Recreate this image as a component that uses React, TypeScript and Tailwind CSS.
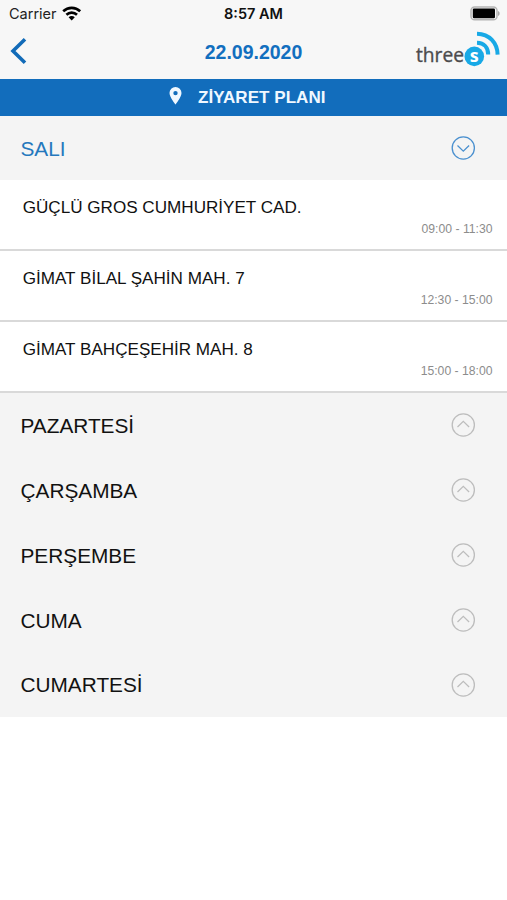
import React from 'react';

const visits = [
  { name: 'GÜÇLÜ GROS CUMHURİYET CAD.', time: '09:00 - 11:30' },
  { name: 'GİMAT BİLAL ŞAHİN MAH. 7', time: '12:30 - 15:00' },
  { name: 'GİMAT BAHÇEŞEHİR MAH. 8', time: '15:00 - 18:00' },
];

const days = ['PAZARTESİ', 'ÇARŞAMBA', 'PERŞEMBE', 'CUMA', 'CUMARTESİ'];

function CircleChevron({ open = false }: { open?: boolean }) {
  return (
    <svg
      width="26"
      height="26"
      viewBox="0 0 26 26"
      fill="none"
      className={open ? 'stroke-[#4a90cf]' : 'stroke-[#bdbdbd]'}
      strokeWidth="1.3"
    >
      <circle cx="13.3" cy="13" r="11.1" />
      <path d={open ? 'M7.5 10.5 13.3 16.2 19.1 10.5' : 'M7.5 15 13.3 9.4 19.1 15'} />
    </svg>
  );
}

function Wifi() {
  return (
    <svg width="20" height="16" viewBox="0 0 20 16" fill="none" stroke="#000" strokeWidth="2.6">
      <path d="M1.2 5.3C6 .7 13.4 .7 18.2 5.3" />
      <path d="M4.4 8.8C7.4 5.9 12 5.9 15 8.8" />
      <path d="M6.6 11.2C8.3 9.5 11.1 9.5 12.8 11.2L9.7 14.5Z" fill="#000" stroke="none" />
    </svg>
  );
}

function Battery() {
  return (
    <svg width="30" height="16" viewBox="0 0 30 16">
      <rect x="1" y="1" width="26" height="12.8" rx="3.6" fill="none" stroke="#b4b4b4" strokeWidth="1.5" />
      <rect x="2.8" y="2.5" width="22.2" height="9.8" rx="1.2" fill="#000" />
      <path d="M28 5C30.2 6.2 30.2 8.8 28 10Z" fill="#a8a8a8" />
    </svg>
  );
}

function Logo() {
  return (
    <svg width="91" height="42" viewBox="0 0 91 42">
      <text x="6" y="35.4" fontSize="19.5" textLength="48" lengthAdjust="spacingAndGlyphs" fill="#4b4b4d" stroke="#4b4b4d" strokeWidth="0.35" className="font-['Open_Sans',sans-serif]">
        three
      </text>
      <circle cx="64.3" cy="29.4" r="9.8" fill="#18a9e6" />
      <text x="64.3" y="34.8" fontSize="18" fontWeight="700" textAnchor="middle" fill="#fff" className="font-['Open_Sans',sans-serif]">
        s
      </text>
      <g fill="none" stroke="#18a9e6" strokeWidth="4">
        <path d="M67 15.8C74 16 78.2 20.6 78.2 27.6" />
        <path d="M67 6.8C79.5 7 87.4 16 87.6 27.6" />
      </g>
    </svg>
  );
}

export default function App() {
  return (
    <div className="h-[900px] w-[507px] overflow-hidden bg-white font-['Liberation_Sans',Arial,sans-serif] text-[#111]">
      <header className="h-[79px] bg-[#f7f7f7]">
        <div className="grid h-[27px] grid-cols-3 pt-1 pr-[7px] pl-[9px] font-['Inter',sans-serif] text-[14.5px]">
          <div className="flex h-[19px] items-center gap-[5px]">
            <span className="text-[#222]">Carrier</span>
            <Wifi />
          </div>
          <div className="flex h-[19px] items-center justify-center pr-[2px] font-semibold">8:57 AM</div>
          <div className="flex h-[19px] items-center justify-end">
            <Battery />
          </div>
        </div>
        <div className="grid h-[52px] grid-cols-[1fr_auto_1fr] items-start">
          <svg width="30" height="48" viewBox="0 0 30 48" fill="none" stroke="#126bb8" strokeWidth="3.6">
            <path d="M25 12.3 13 24 25 35.7" />
          </svg>
          <h1 className="pt-[11px] text-[19.5px] leading-[28px] font-bold text-[#126fbf]">22.09.2020</h1>
          <div className="flex justify-end pr-[6px]">
            <Logo />
          </div>
        </div>
      </header>

      <div className="flex h-[37px] items-center bg-[#126dbc] pl-[169px] text-[17px] font-bold text-[#f0f8ff]">
        <svg width="13" height="18" viewBox="0 0 13 18" fill="currentColor" className="mb-[3px]">
          <path fillRule="evenodd" d="M6.5 0A6 6 0 0 0 .5 6.1C.5 10.3 6.5 17.6 6.5 17.6S12.5 10.3 12.5 6.1A6 6 0 0 0 6.5 0ZM6.5 3.9A2.2 2.2 0 1 1 6.5 8.3 2.2 2.2 0 0 1 6.5 3.9Z" />
        </svg>
        <span className="ml-4 tracking-[0.05px]">ZİYARET PLANI</span>
      </div>

      <section>
        <div className="flex h-16 items-center justify-between bg-[#f4f4f4] pr-[31px] pl-[20.5px] text-[20.8px] text-[#2478bd]">
          <span className="pt-0.5">SALI</span>
          <CircleChevron open />
        </div>
        {visits.map((visit) => (
          <div key={visit.name} className="flex h-[71px] flex-col border-b-2 border-[#d9d9d9] pt-[17px] pr-[14.5px] pl-[22.7px]">
            <span className="text-[17.1px] leading-[22px]">{visit.name}</span>
            <span className="self-end pt-[2px] text-[12.2px] leading-4 text-[#8c8c8c]">{visit.time}</span>
          </div>
        ))}
        {days.map((day) => (
          <div key={day} className="flex h-[64.8px] items-center justify-between bg-[#f4f4f4] pr-[31px] pl-[20.5px] text-[20.8px]">
            <span className="pt-px">{day}</span>
            <CircleChevron />
          </div>
        ))}
      </section>
    </div>
  );
}
